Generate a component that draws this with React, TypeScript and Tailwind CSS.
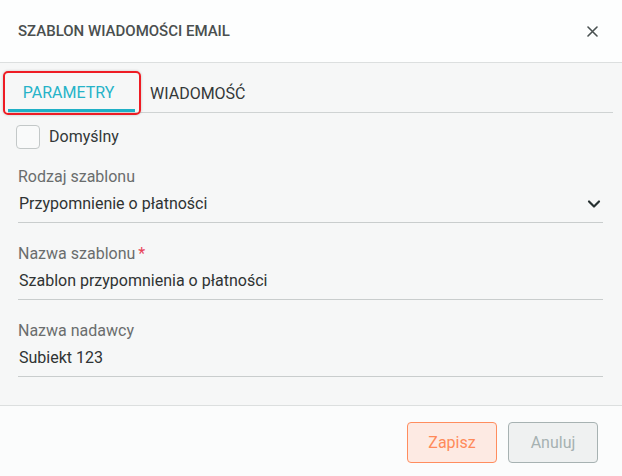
import { ChevronDown } from 'lucide-react';

function Field({ label, value, required, select }: { label: string; value: string; required?: boolean; select?: boolean }) {
  return (
    <div className="flex flex-col border-b border-[#c9cdcd] pb-[8px]">
      <div className="flex h-[20px] items-center text-[16px] leading-[20px] text-[#6a6d6d]">
        {label}
        {required && <span className="ml-[3px] text-[#e8445a]">*</span>}
      </div>
      <div className="mt-[7px] flex h-[20px] items-center justify-between pl-[1px] text-[16px] leading-[20px] text-[#2f3333]">
        <span>{value}</span>
        {select && <ChevronDown size={20} strokeWidth={2.6} className="-mr-[1px] text-[#263030]" />}
      </div>
    </div>
  );
}

export default function App() {
  return (
    <div className="flex h-[476px] w-[622px] flex-col bg-white font-['Roboto',sans-serif]">
      {/* header */}
      <header className="flex h-[63px] shrink-0 items-center justify-between border-b border-[#dcdfdf] bg-[#fdfefe] pl-[18px] pr-[24px]">
        <h1 className="text-[15px] font-medium uppercase text-[#4a4f4f]">Szablon wiadomości email</h1>
        <svg width="11" height="11" viewBox="0 0 11 11" className="text-[#4a5151]">
          <path d="M1 1 L10 10 M10 1 L1 10" stroke="currentColor" strokeWidth="1.6" strokeLinecap="round" />
        </svg>
      </header>

      {/* body */}
      <div className="flex flex-1 flex-col border-b border-[#dcdfdf] bg-[#f6f7f7] pl-[8px] pr-[9px] pt-[8px]">
        <div className="flex border-b border-[#cfd3d3]">
          <div className="relative -mb-[1px] flex h-[41px] w-[127px] items-center justify-center border-b-[3px] border-[#1fb0c6] pr-[6px] pt-[5px] text-[16px] text-[#25b3c8]">
            PARAMETRY
            <span className="absolute -bottom-[6px] -left-[5px] -right-[6px] top-0 rounded-[5px] border-2 border-[#ee1c24] shadow-[0_0_3px_rgba(0,0,0,0.2)]" />
          </div>
          <div className="flex h-[41px] items-center pl-[15px] pt-[5px] text-[16px] text-[#333838]">WIADOMOŚĆ</div>
        </div>

        <div className="flex flex-col px-[10px]">
          <label className="mt-[12px] flex items-center gap-[9px]">
            <span className="-ml-[2px] h-[24px] w-[24px] rounded-[4px] border border-[#c3c8c8] bg-[#f9fafa]" />
            <span className="text-[16px] text-[#333838]">Domyślny</span>
          </label>

          <div className="mt-[18px] flex flex-col gap-[21px]">
            <Field label="Rodzaj szablonu" value="Przypomnienie o płatności" select />
            <Field label="Nazwa szablonu" value="Szablon przypomnienia o płatności" required />
            <Field label="Nazwa nadawcy" value="Subiekt 123" />
          </div>
        </div>
      </div>

      {/* footer */}
      <footer className="flex h-[70px] shrink-0 items-start justify-end gap-[11px] bg-[#fbfcfc] pr-[24px] pt-[16px]">
        <button className="h-[41px] w-[90px] rounded-[4px] border border-[#ff8d5e] bg-[#fdeae3] text-[16px] text-[#ff8a5a]">Zapisz</button>
        <button className="h-[41px] w-[90px] rounded-[4px] border border-[#a7b2b2] bg-[#eff1f1] text-[16px] text-[#a6b1b1]">Anuluj</button>
      </footer>
    </div>
  );
}
